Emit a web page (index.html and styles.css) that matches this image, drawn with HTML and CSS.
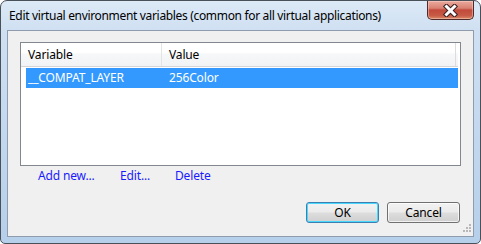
FILE: index.html
```html
<!DOCTYPE html>
<html>
<head>
<meta charset="utf-8">
<link rel="stylesheet" href="styles.css">
</head>
<body>
<div class="window">
  <div class="titlebar">
    <div class="title">Edit virtual environment variables (common for all virtual applications)</div>
    <div class="close">
      <svg width="17" height="13" viewBox="0 0 17 13">
        <path d="M4.5 2.5 L12.5 10.5 M12.5 2.5 L4.5 10.5" stroke="#3a2020" stroke-width="5" stroke-linecap="square" fill="none"/>
        <path d="M4.5 2.5 L12.5 10.5 M12.5 2.5 L4.5 10.5" stroke="#ffffff" stroke-width="3" stroke-linecap="square" fill="none"/>
      </svg>
    </div>
  </div>
  <div class="client">
    <div class="listview">
      <div class="header">
        <div class="col col1">Variable</div>
        <div class="col col2">Value</div>
      </div>
      <div class="row selected">
        <div class="cell cell1">__COMPAT_LAYER</div>
        <div class="cell cell2">256Color</div>
      </div>
    </div>
    <div class="links">
      <span class="link l1">Add new...</span>
      <span class="link l2">Edit...</span>
      <span class="link l3">Delete</span>
    </div>
    <div class="buttons">
      <div class="btn default">OK</div>
      <div class="btn">Cancel</div>
    </div>
    <div class="grip">
      <svg width="11" height="11" viewBox="0 0 11 11">
        <g fill="#b8b8b8">
          <rect x="8" y="0" width="2" height="2"/>
          <rect x="5" y="3" width="2" height="2"/><rect x="8" y="3" width="2" height="2"/>
          <rect x="2" y="6" width="2" height="2"/><rect x="5" y="6" width="2" height="2"/><rect x="8" y="6" width="2" height="2"/>
        </g>
      </svg>
    </div>
  </div>
</div>
</body>
</html>
```

FILE: styles.css
```css
html, body {
  margin: 0;
  padding: 0;
  background: #ffffff;
}
body {
  font-family: "Noto Sans", "Open Sans", sans-serif;
  font-size: 12px;
  letter-spacing: -0.15px;
}
.window {
  box-sizing: border-box;
  width: 481px;
  height: 244px;
  border: 1px solid #4a5058;
  border-radius: 7px 7px 5px 5px;
  background: linear-gradient(180deg, #dce9f6 0px, #cfe0f2 30px, #c4d9ef 120px, #b6cfea 244px);
  padding: 0 6px 6px 6px;
  display: flex;
  flex-direction: column;
  overflow: hidden;
}
.titlebar {
  height: 29px;
  display: flex;
  justify-content: space-between;
  align-items: flex-start;
}
.title {
  padding: 7px 0 0 2px;
  line-height: 16px;
  color: #000;
  white-space: nowrap;
  letter-spacing: -0.33px;
}
.close {
  width: 45px;
  height: 18px;
  border: 1px solid #4e2a28;
  border-top: none;
  border-radius: 0 0 5px 5px;
  background: linear-gradient(180deg, #eaaa9e 0%, #d88172 40%, #c24a3a 50%, #c65a45 80%, #d98a66 100%);
  display: flex;
  align-items: center;
  justify-content: center;
  box-shadow: inset 0 0 0 1px rgba(255,220,210,0.45);
}
.close svg { display: block; }
.client {
  position: relative;
  flex: 1;
  border: 1px solid #8e9cad;
  background: #f0f0f0;
  padding: 11px 12px 13px 12px;
  display: flex;
  flex-direction: column;
}
.listview {
  height: 124px;
  box-sizing: border-box;
  border: 1px solid #828790;
  background: #ffffff;
}
.header {
  display: flex;
  height: 23px;
  border-bottom: 1px solid #d5d5d5;
  background: linear-gradient(180deg, #ffffff 0%, #ffffff 40%, #f6f7f8 50%, #f2f3f5 100%);
  margin-right: 2px;
}
.col {
  line-height: 23px;
  padding-left: 7px;
  color: #000;
  box-sizing: border-box;
}
.col1 {
  width: 141px;
  border-right: 1px solid #e3e4e6;
}
.col2 {
  width: 294px;
  border-right: 1px solid #dcdcdc;
}
.row {
  display: flex;
  height: 20px;
  margin: 1px 2px 0 5px;
}
.row.selected {
  background: #3399ff;
  color: #ffffff;
}
.cell {
  line-height: 20px;
  box-sizing: border-box;
}
.cell1 {
  width: 136px;
  padding-left: 2px;
}
.cell2 {
  padding-left: 7px;
}
.links {
  display: flex;
  margin-top: 2px;
  padding-left: 18px;
  line-height: 16px;
}
.link {
  color: #1a1aff;
  display: inline-block;
}
.l1 { width: 82px; }
.l2 { width: 55px; }
.buttons {
  margin-top: auto;
  display: flex;
  justify-content: flex-end;
  gap: 8px;
  padding-right: 1px;
}
.btn {
  box-sizing: border-box;
  width: 73px;
  height: 21px;
  border: 1px solid #707070;
  border-radius: 3px;
  background: linear-gradient(180deg, #f2f2f2 0%, #ebebeb 48%, #dddddd 52%, #cfcfcf 100%);
  box-shadow: inset 0 0 0 1px rgba(255,255,255,0.7);
  text-align: center;
  line-height: 19px;
  color: #000;
}
.btn.default {
  border-color: #3c7fb1;
  box-shadow: inset 0 0 0 1px #48d8fb;
}
.grip {
  position: absolute;
  right: 1px;
  bottom: 1px;
  width: 11px;
  height: 11px;
}
.grip svg { display: block; }
```
